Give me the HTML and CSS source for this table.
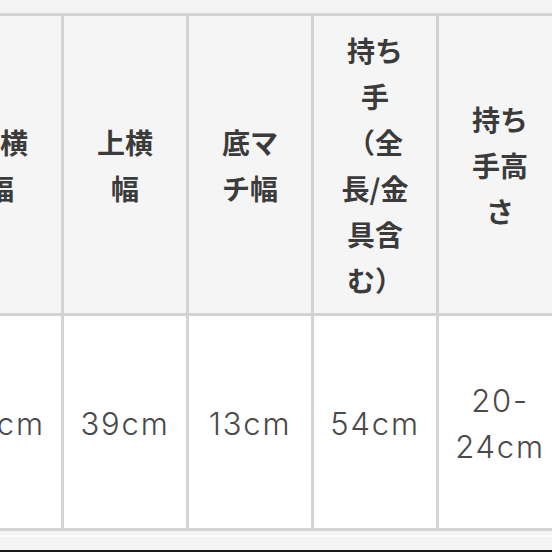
FILE: index.html
```html
<!DOCTYPE html>
<html lang="ja">
<head>
<meta charset="utf-8">
<link rel="stylesheet" href="styles.css">
</head>
<body>
<div class="page">
  <table class="size-table">
    <colgroup>
      <col class="c"><col class="c"><col class="c"><col class="c"><col class="c">
    </colgroup>
    <thead>
      <tr>
        <th>下横幅</th>
        <th>上横幅</th>
        <th>底マチ幅</th>
        <th>持ち手（全長/金具含む）</th>
        <th>持ち手高さ</th>
      </tr>
    </thead>
    <tbody>
      <tr>
        <td>45cm</td>
        <td>39cm</td>
        <td>13cm</td>
        <td>54cm</td>
        <td>20-24cm</td>
      </tr>
    </tbody>
  </table>
  <div class="after"></div>
</div>
</body>
</html>
```
FILE: styles.css
```css
html, body {
  margin: 0;
  padding: 0;
  background: #f4f4f4;
  overflow: hidden;
}
.page {
  width: 552px;
  height: 552px;
  padding-top: 13px;
  box-sizing: border-box;
  background: #f4f4f4;
  border-bottom: 2px solid #1a1a1a;
  overflow: hidden;
  position: relative;
}
.size-table {
  border-collapse: collapse;
  table-layout: fixed;
  width: 625px;
  margin-left: -64px;
}
.size-table col.c {
  width: 125px;
}
.size-table th,
.size-table td {
  border: 3px solid #d3d3d3;
  text-align: center;
  vertical-align: middle;
  color: #3e3e3e;
}
.size-table th {
  background: #f5f5f5;
  font-family: "Noto Sans CJK JP", sans-serif;
  font-weight: 700;
  font-size: 28px;
  line-height: 46px;
  padding: 10px 20px;
  height: 277px;
  color: #3b3b3b;
}
.size-table td {
  background: #ffffff;
  font-family: "Inter", "Noto Sans", sans-serif;
  font-weight: 300;
  font-size: 31px;
  letter-spacing: 1.8px;
  line-height: 46px;
  padding: 4px 10px 0;
  height: 208px;
  color: #4a4a4a;
}
.after {
  margin-top: 4px;
  height: 2px;
  background: #fbfbfb;
}
```
